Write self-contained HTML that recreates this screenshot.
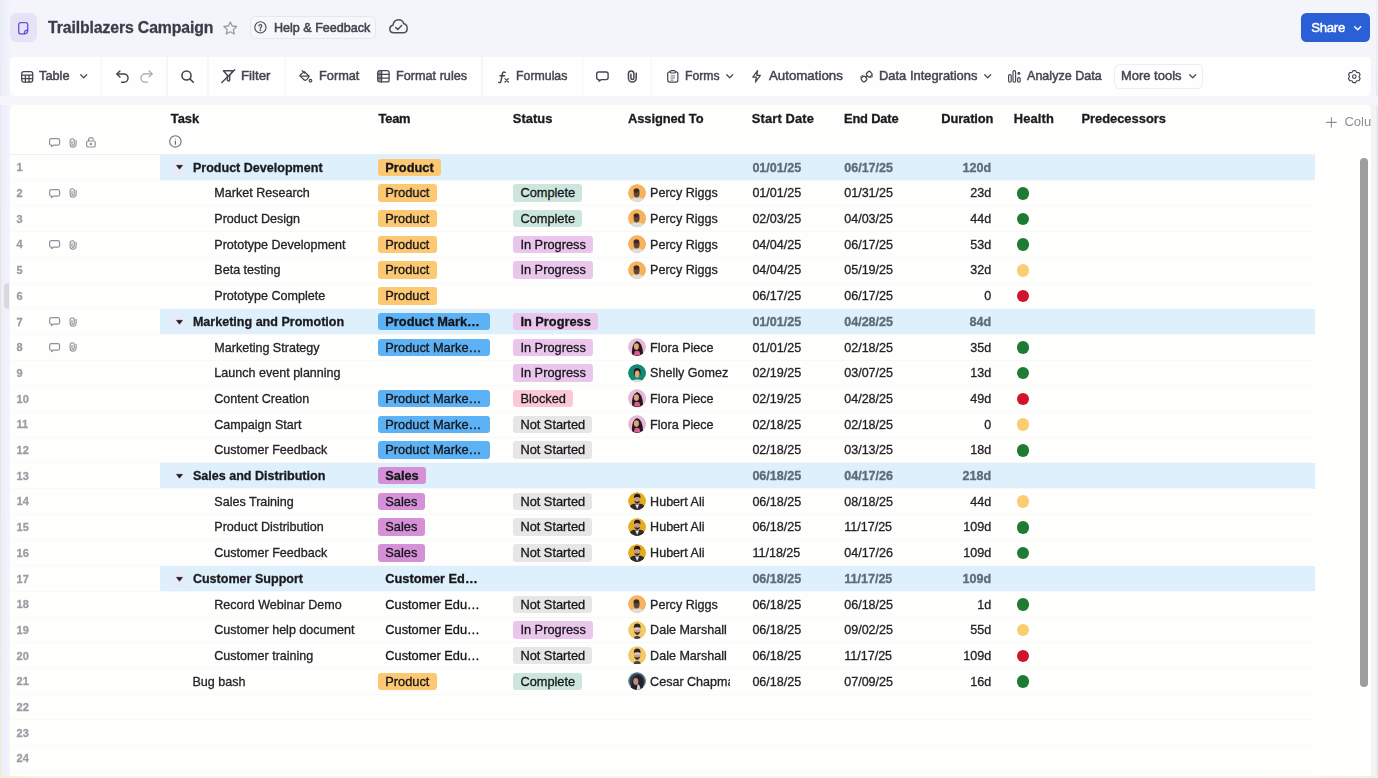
<!DOCTYPE html>
<html><head><meta charset="utf-8"><title>Trailblazers Campaign</title>
<style>
*{box-sizing:border-box}
html,body{margin:0;padding:0}
body{width:1378px;height:778px;overflow:hidden;position:relative;background:#f4f5fa;font-family:"Liberation Sans",sans-serif;}
.t{position:absolute;white-space:nowrap;line-height:20px;}
.i{position:absolute;overflow:visible}
.box{position:absolute}
.tb{-webkit-text-stroke:0.48px #44464f}
.tag{position:absolute;height:17.4px;border-radius:3.2px}
.row{position:absolute;left:160px;width:1155.3px;height:25.7px;background:#ddf0fb}
.ln{position:absolute;left:12px;width:1300px;height:1px;background:#f8f8fb}
.dot{position:absolute;width:12.7px;height:12.7px;border-radius:50%}
.sep{position:absolute;top:57px;width:1.3px;height:39.2px;background:#f5f5fa}
.av{position:absolute;width:18.3px;height:18.3px;border-radius:50%;overflow:hidden}
#w{position:absolute;left:0;top:0;width:1378px;height:778px;filter:blur(0.4px)}
.c{-webkit-text-stroke:0.3px currentColor}
</style></head><body><div id="w">

<div class="box" style="left:0;top:0;width:10px;height:778px;background:linear-gradient(90deg,#e9eefa,#eef1fb 60%,#f3f4fb)"></div>
<div class="box" style="left:0;top:0;width:1.3px;height:778px;background:linear-gradient(#f1eaf0,#f1dede 35%,#f2e3da 75%,#f1eac8)"></div>
<div class="box" style="left:4.2px;top:283px;width:4.8px;height:26px;border-radius:4.5px 0 0 4.5px;background:#d9dae0"></div>
<div class="box" style="left:1371px;top:100px;width:5px;height:678px;background:#f2f3f5"></div>
<div class="box" style="left:1375.6px;top:0;width:2.4px;height:778px;background:linear-gradient(#eef1f6,#e3efee 12%,#e3efee)"></div>
<div class="box" style="left:0;top:776px;width:1378px;height:2px;background:linear-gradient(90deg,#f1efd2,#fbf8e9 4%,#fbf8ea 90%,#eaf1ea)"></div>
<div class="box" style="left:10px;top:13px;width:27.2px;height:29.2px;border-radius:6.5px;background:#e8e2f7"></div>
<svg class="i" style="left:18.00px;top:21.50px" width="10.4" height="12.6" viewBox="0 0 10.4 12.6" fill="none" stroke="#6352d9" stroke-width="1.3" stroke-linecap="round" stroke-linejoin="round" ><path d="M2.6 0.7 H7.8 Q9.7 0.7 9.7 2.6 V8.2 Q9.7 11.9 6.2 11.9 H2.6 Q0.7 11.9 0.7 10 V2.6 Q0.7 0.7 2.6 0.7 Z"/><path d="M9.7 8.3 Q6.4 7.8 6.3 11.8"/></svg>
<span class="t c" style="left:48.00px;top:17px;line-height:21px;font-size:15.8px;font-weight:bold;color:#3b3d48;letter-spacing:-0.111px;">Trailblazers Campaign</span>
<svg class="i" style="left:223.20px;top:21.20px" width="14.6" height="14" viewBox="0 0 14.6 14" fill="none" stroke="#9a9ba3" stroke-width="1.3" stroke-linecap="round" stroke-linejoin="round" ><path d="M7.3 0.9 L9.2 5 L13.7 5.5 L10.4 8.6 L11.3 13 L7.3 10.8 L3.3 13 L4.2 8.6 L0.9 5.5 L5.4 5 Z"/></svg>
<div class="box" style="left:249.6px;top:15.8px;width:126px;height:23.6px;border-radius:5.5px;background:#f6f7fb;border:1px solid #e6e7ee"></div>
<svg class="i" style="left:254.20px;top:21.20px" width="12.8" height="12.8" viewBox="0 0 12.8 12.8" fill="none" stroke="#4a4c57" stroke-width="1.15" stroke-linecap="round" stroke-linejoin="round" ><circle cx="6.4" cy="6.4" r="5.6"/><path d="M4.9 5.1 Q4.9 3.6 6.4 3.6 Q7.9 3.6 7.9 5 Q7.9 6 6.4 6.7 V7.4"/><circle cx="6.4" cy="9.3" r="0.35" fill="#4a4c57"/></svg>
<span class="t " style="left:273.50px;top:18px;line-height:19px;font-size:13.2px;color:#41434e;transform:scaleX(0.9520);transform-origin:0 0;-webkit-text-stroke:0.55px #41434e;">Help &amp; Feedback</span>
<svg class="i" style="left:388.60px;top:19.00px" width="19" height="14.6" viewBox="0 0 19 14.6" fill="none" stroke="#4a4c57" stroke-width="1.45" stroke-linecap="round" stroke-linejoin="round" ><path d="M5 13.8 Q0.8 13.8 0.8 10 Q0.8 6.8 4 6.2 Q4.6 0.8 9.6 0.8 Q13.6 0.8 14.8 4.8 Q18.2 5.4 18.2 9.4 Q18.2 13.8 14 13.8 Z"/><path d="M6.6 8.4 L8.8 10.6 L12.6 6.4"/></svg>
<div class="box" style="left:1300.8px;top:13.2px;width:69.6px;height:28.8px;border-radius:5.5px;background:#2b5fd6"></div>
<span class="t c" style="left:1311.20px;top:18px;line-height:19px;font-size:13.2px;color:#ffffff;letter-spacing:-0.281px;-webkit-text-stroke:0.45px #fff;">Share</span>
<svg class="i" style="left:1354.40px;top:25.80px" width="7.4" height="4.6" viewBox="0 0 7.4 4.6" fill="none" stroke="#ffffff" stroke-width="1.5" stroke-linecap="round" stroke-linejoin="round" ><path d="M0.7 0.7 L3.7 3.7 L6.7 0.7"/></svg>
<div class="box" style="left:0;top:96px;width:1378px;height:9px;background:#f7f7fb"></div>
<div class="box" style="left:10.2px;top:57px;width:1360.8px;height:39.2px;border-radius:4.5px;background:#fefefe"></div>
<div class="sep" style="left:100.8px"></div>
<div class="sep" style="left:166.4px"></div>
<div class="sep" style="left:207.4px"></div>
<div class="sep" style="left:285.2px"></div>
<div class="sep" style="left:481.4px"></div>
<div class="sep" style="left:581.6px"></div>
<div class="sep" style="left:651.2px"></div>
<svg class="i" style="left:21.20px;top:70.60px" width="12.4" height="11.8" viewBox="0 0 12.4 11.8" fill="none" stroke="#44464f" stroke-width="1.25" stroke-linecap="round" stroke-linejoin="round" ><rect x="0.7" y="0.7" width="11" height="10.4" rx="2"/><path d="M0.7 4.1 H11.7 M0.7 7.6 H11.7 M4.4 4.1 V11.1 M8 4.1 V11.1"/></svg>
<span class="t tb" style="left:39.40px;top:66px;line-height:19px;font-size:13.0px;color:#44464f;transform:scaleX(0.9814);transform-origin:0 0;">Table</span>
<svg class="i" style="left:79.80px;top:74.40px" width="7.4" height="4.6" viewBox="0 0 7.4 4.6" fill="none" stroke="#4a4c57" stroke-width="1.3" stroke-linecap="round" stroke-linejoin="round" ><path d="M0.7 0.7 L3.7 3.7 L6.7 0.7"/></svg>
<svg class="i" style="left:115.60px;top:69.80px" width="13" height="13" viewBox="0 0 13 13" fill="none" stroke="#44464f" stroke-width="1.45" stroke-linecap="round" stroke-linejoin="round" ><path d="M1 3.9 H7.9 A4.15 4.15 0 0 1 7.9 12.2 H5.6"/><path d="M3.9 0.9 L0.9 3.9 L3.9 6.9"/></svg>
<svg class="i" style="left:140.20px;top:69.80px" width="13" height="13" viewBox="0 0 13 13" fill="none" stroke="#a4a5ae" stroke-width="1.3" stroke-linecap="round" stroke-linejoin="round" ><path d="M12 3.9 H5.1 A4.15 4.15 0 0 0 5.1 12.2 H7.4"/><path d="M9.1 0.9 L12.1 3.9 L9.1 6.9"/></svg>
<svg class="i" style="left:181.00px;top:70.00px" width="13.2" height="13.2" viewBox="0 0 13.2 13.2" fill="none" stroke="#44464f" stroke-width="1.55" stroke-linecap="round" stroke-linejoin="round" ><circle cx="5.5" cy="5.5" r="4.55"/><path d="M8.9 8.9 L12.3 12.3"/></svg>
<svg class="i" style="left:220.60px;top:69.40px" width="14.6" height="14.4" viewBox="0 0 14.6 14.4" fill="none" stroke="#44464f" stroke-width="1.4" stroke-linecap="round" stroke-linejoin="round" ><path d="M2.4 1.8 H12 L8.7 6.3 V11 Q8.6 12.4 7.2 11.8 L6.4 11.4 V6.3 Z"/><path d="M13.8 0.8 L0.8 13.6"/></svg>
<span class="t tb" style="left:241.20px;top:66px;line-height:19px;font-size:13.0px;color:#44464f;transform:scaleX(1.0211);transform-origin:0 0;">Filter</span>
<svg class="i" style="left:299.20px;top:70.00px" width="13.4" height="12.8" viewBox="0 0 13.4 12.8" fill="none" stroke="#44464f" stroke-width="1.2" stroke-linecap="round" stroke-linejoin="round" ><path d="M5.4 1.6 L9.6 5.8 Q10.4 6.6 9.6 7.4 L7.4 9.8 Q6.2 10.9 5 9.8 L1.4 6.4 Q0.6 5.6 1.4 4.8 Z"/><path d="M1.2 6.1 H10"/><path d="M3.2 0.7 L5.6 3"/><circle cx="11.5" cy="10.7" r="1.3"/></svg>
<span class="t tb" style="left:318.90px;top:66px;line-height:19px;font-size:13.0px;color:#44464f;transform:scaleX(0.9812);transform-origin:0 0;">Format</span>
<svg class="i" style="left:377.00px;top:70.20px" width="12.8" height="12.6" viewBox="0 0 12.8 12.6" fill="none" stroke="#44464f" stroke-width="1.25" stroke-linecap="round" stroke-linejoin="round" ><rect x="0.7" y="0.7" width="11.4" height="11.2" rx="2"/><path d="M0.7 4.4 H12.1 M0.7 8.1 H12.1 M4.6 0.7 V11.9"/><rect x="1.2" y="1.2" width="3" height="10.2" fill="#44464f" stroke="none" opacity="0.55"/></svg>
<span class="t tb" style="left:396.30px;top:66px;line-height:19px;font-size:13.0px;color:#44464f;transform:scaleX(0.9745);transform-origin:0 0;">Format rules</span>
<svg class="i" style="left:497.60px;top:70.60px" width="11.2" height="12.2" viewBox="0 0 11.2 12.2" fill="none" stroke="#44464f" stroke-width="1.45" stroke-linecap="round" stroke-linejoin="round" ><path d="M7.2 1.4 Q4.9 0.2 4.4 2.8 L3 10 Q2.6 12.2 0.7 11.4"/><path d="M2 4.7 H6.6"/><path d="M7 7.6 L10.4 11 M10.4 7.6 L7 11" stroke-width="1.25"/></svg>
<span class="t tb" style="left:515.90px;top:66px;line-height:19px;font-size:13.0px;color:#44464f;transform:scaleX(0.9487);transform-origin:0 0;">Formulas</span>
<svg class="i" style="left:596.20px;top:70.80px" width="12.8" height="11.2" viewBox="0 0 11.2 9.2" fill="none" stroke="#44464f" stroke-width="1.2" stroke-linecap="round" stroke-linejoin="round" ><path d="M2.4 0.6 H8.8 Q10.6 0.6 10.6 2.4 V5.4 Q10.6 7.2 8.8 7.2 H4.6 L2.6 8.6 V7.2 H2.4 Q0.6 7.2 0.6 5.4 V2.4 Q0.6 0.6 2.4 0.6 Z"/></svg>
<svg class="i" style="left:626.80px;top:69.80px" width="10.4" height="12.8" viewBox="0 0 8 9.8" fill="none" stroke="#44464f" stroke-width="1.15" stroke-linecap="round" stroke-linejoin="round" ><path d="M7.1 2.4 V6.3 A3 3 0 0 1 1.1 6.3 V2.8 A2.1 2.1 0 0 1 5.3 2.8 V6.2 A1.15 1.15 0 0 1 3 6.2 V3.2" /></svg>
<svg class="i" style="left:666.80px;top:69.80px" width="11.6" height="12.8" viewBox="0 0 11.6 12.8" fill="none" stroke="#44464f" stroke-width="1.2" stroke-linecap="round" stroke-linejoin="round" ><rect x="0.7" y="1.8" width="10.2" height="10.3" rx="2"/><rect x="3.3" y="0.6" width="5" height="2.4" rx="1" fill="#fefefe"/><path d="M3.6 5.9 H8 M3.6 8 H8 M3.6 10.1 H6.4" stroke-width="0.75" stroke-linecap="butt"/></svg>
<span class="t tb" style="left:685.10px;top:66px;line-height:19px;font-size:13.0px;color:#44464f;transform:scaleX(0.9394);transform-origin:0 0;">Forms</span>
<svg class="i" style="left:726.20px;top:74.40px" width="7.4" height="4.6" viewBox="0 0 7.4 4.6" fill="none" stroke="#4a4c57" stroke-width="1.3" stroke-linecap="round" stroke-linejoin="round" ><path d="M0.7 0.7 L3.7 3.7 L6.7 0.7"/></svg>
<svg class="i" style="left:751.80px;top:69.80px" width="9.2" height="12.8" viewBox="0 0 9.2 12.8" fill="none" stroke="#44464f" stroke-width="1.2" stroke-linecap="round" stroke-linejoin="round" ><path d="M5.6 0.7 L0.8 7.2 H4.4 L3.4 12.1 L8.4 5.4 H4.8 Z"/></svg>
<span class="t tb" style="left:768.50px;top:66px;line-height:19px;font-size:13.0px;color:#44464f;transform:scaleX(1.0213);transform-origin:0 0;">Automations</span>
<svg class="i" style="left:860.00px;top:69.60px" width="13.2" height="13.2" viewBox="0 0 13.2 13.2" fill="none" stroke="#44464f" stroke-width="1.3" stroke-linecap="round" stroke-linejoin="round" ><g transform="rotate(-42 6.6 6.6)"><rect x="0.6" y="4.1" width="4.9" height="5" rx="1.5"/><rect x="7.7" y="4.1" width="4.9" height="5" rx="1.5"/><path d="M5.5 6.6 H7.7"/><path d="M2.1 2.7 V4.1 M4 2.7 V4.1 M9.2 9.1 V10.5 M11.1 9.1 V10.5" stroke-width="1"/></g></svg>
<span class="t tb" style="left:879.30px;top:66px;line-height:19px;font-size:13.0px;color:#44464f;transform:scaleX(0.9939);transform-origin:0 0;">Data Integrations</span>
<svg class="i" style="left:983.80px;top:74.40px" width="7.4" height="4.6" viewBox="0 0 7.4 4.6" fill="none" stroke="#4a4c57" stroke-width="1.3" stroke-linecap="round" stroke-linejoin="round" ><path d="M0.7 0.7 L3.7 3.7 L6.7 0.7"/></svg>
<svg class="i" style="left:1007.60px;top:69.80px" width="13.4" height="12.8" viewBox="0 0 13.4 12.8" fill="none" stroke="#44464f" stroke-width="1.15" stroke-linecap="round" stroke-linejoin="round" ><rect x="0.6" y="4.6" width="2.6" height="7.6" rx="1.2"/><rect x="5" y="0.6" width="2.6" height="11.6" rx="1.2"/><rect x="9.6" y="7.6" width="2.6" height="4.6" rx="1.2"/><circle cx="10.9" cy="3.4" r="0.9" fill="#44464f"/></svg>
<span class="t tb" style="left:1026.60px;top:66px;line-height:19px;font-size:13.0px;color:#44464f;transform:scaleX(0.9661);transform-origin:0 0;">Analyze Data</span>
<div class="box" style="left:1113.6px;top:64.2px;width:89.6px;height:24.4px;border-radius:5.5px;background:#fefefe;border:1px solid #ebedf4"></div>
<span class="t tb" style="left:1120.90px;top:66px;line-height:19px;font-size:13.0px;color:#44464f;transform:scaleX(0.9968);transform-origin:0 0;">More tools</span>
<svg class="i" style="left:1188.90px;top:74.40px" width="7.4" height="4.6" viewBox="0 0 7.4 4.6" fill="none" stroke="#4a4c57" stroke-width="1.3" stroke-linecap="round" stroke-linejoin="round" ><path d="M0.7 0.7 L3.7 3.7 L6.7 0.7"/></svg>
<svg class="i" style="left:1347.60px;top:69.80px" width="12.6" height="13.2" viewBox="0 0 12.6 13.2" fill="none" stroke="#44464f" stroke-width="1.15" stroke-linecap="round" stroke-linejoin="round" ><path d="M5.13 0.56 L7.47 0.56 L8.68 2.49 L10.94 2.57 L12.11 4.60 L11.05 6.60 L12.11 8.60 L10.94 10.63 L8.68 10.71 L7.47 12.64 L5.13 12.64 L3.93 10.71 L1.66 10.63 L0.49 8.60 L1.55 6.60 L0.49 4.60 L1.66 2.57 L3.92 2.49 Z" stroke-linejoin="round"/><circle cx="6.3" cy="6.6" r="1.8"/></svg>
<div class="box" style="left:9.6px;top:104.5px;width:1361.4px;height:671.5px;border-radius:5px 5px 0 0;background:#fefefd"></div>
<span class="t c" style="left:170.80px;top:109px;line-height:19px;font-size:12.9px;font-weight:bold;color:#1b1b1f;letter-spacing:-0.016px;">Task</span>
<span class="t c" style="left:378.50px;top:109px;line-height:19px;font-size:12.9px;font-weight:bold;color:#1b1b1f;letter-spacing:-0.214px;">Team</span>
<span class="t c" style="left:512.80px;top:109px;line-height:19px;font-size:12.9px;font-weight:bold;color:#1b1b1f;letter-spacing:0.035px;">Status</span>
<span class="t c" style="left:628.00px;top:109px;line-height:19px;font-size:12.9px;font-weight:bold;color:#1b1b1f;letter-spacing:-0.085px;">Assigned To</span>
<span class="t c" style="left:751.80px;top:109px;line-height:19px;font-size:12.9px;font-weight:bold;color:#1b1b1f;letter-spacing:0.140px;">Start Date</span>
<span class="t c" style="left:844.00px;top:109px;line-height:19px;font-size:12.9px;font-weight:bold;color:#1b1b1f;letter-spacing:-0.187px;">End Date</span>
<span class="t c" style="left:941.20px;top:109px;line-height:19px;font-size:12.9px;font-weight:bold;color:#1b1b1f;letter-spacing:-0.104px;">Duration</span>
<span class="t c" style="left:1013.70px;top:109px;line-height:19px;font-size:12.9px;font-weight:bold;color:#1b1b1f;letter-spacing:0.135px;">Health</span>
<span class="t c" style="left:1081.40px;top:109px;line-height:19px;font-size:12.9px;font-weight:bold;color:#1b1b1f;letter-spacing:-0.002px;">Predecessors</span>
<svg class="i" style="left:49.30px;top:138.00px" width="11.2" height="9.2" viewBox="0 0 11.2 9.2" fill="none" stroke="#8f909b" stroke-width="1.2" stroke-linecap="round" stroke-linejoin="round" ><path d="M2.4 0.6 H8.8 Q10.6 0.6 10.6 2.4 V5.4 Q10.6 7.2 8.8 7.2 H4.6 L2.6 8.6 V7.2 H2.4 Q0.6 7.2 0.6 5.4 V2.4 Q0.6 0.6 2.4 0.6 Z"/></svg>
<svg class="i" style="left:69.00px;top:137.80px" width="8" height="9.8" viewBox="0 0 8 9.8" fill="none" stroke="#8f909b" stroke-width="1.1" stroke-linecap="round" stroke-linejoin="round" ><path d="M7.1 2.4 V6.3 A3 3 0 0 1 1.1 6.3 V2.8 A2.1 2.1 0 0 1 5.3 2.8 V6.2 A1.15 1.15 0 0 1 3 6.2 V3.2" /></svg>
<svg class="i" style="left:86.00px;top:137.20px" width="9.8" height="10.6" viewBox="0 0 9.8 10.6" fill="none" stroke="#8f909b" stroke-width="1.2" stroke-linecap="round" stroke-linejoin="round" ><rect x="0.6" y="4" width="8.6" height="6" rx="1.4"/><path d="M2.6 4 V2.6 Q2.6 0.6 4.9 0.6 Q7.2 0.6 7.2 2.6"/><circle cx="4.9" cy="7" r="0.7" fill="#8f909b"/></svg>
<svg class="i" style="left:169.30px;top:135.00px" width="12.8" height="12.8" viewBox="0 0 12.8 12.8" fill="none" stroke="#6d6e78" stroke-width="1.1" stroke-linecap="round" stroke-linejoin="round" ><circle cx="6.4" cy="6.4" r="5.7"/><path d="M6.4 6.2 V9.2" stroke-width="1.2"/><circle cx="6.4" cy="3.9" r="0.5" fill="#6d6e78" stroke="none"/></svg>
<svg class="i" style="left:1326.20px;top:117.40px" width="10.8" height="10.8" viewBox="0 0 10.8 10.8" fill="none" stroke="#8d8e97" stroke-width="1.1" stroke-linecap="round" stroke-linejoin="round" ><path d="M5.4 0.6 V10.2 M0.6 5.4 H10.2"/></svg>
<div class="box" style="left:1340px;top:108px;width:31px;height:26px;overflow:hidden"><span class="t" style="left:4.4px;top:4.4px;font-size:13px;color:#8d8e97">Column</span></div>
<div class="box" style="left:1360px;top:157.6px;width:7.6px;height:529px;border-radius:3.8px;background:#9e9e9f"></div>
<div class="row" style="top:154.50px"></div>
<div class="row" style="top:308.70px"></div>
<div class="row" style="top:462.90px"></div>
<div class="row" style="top:565.70px"></div>
<div class="ln" style="top:154.00px;background:#efeff3;left:10px;width:1305px"></div>
<div class="ln" style="top:179.70px"></div>
<div class="ln" style="top:205.40px"></div>
<div class="ln" style="top:231.10px"></div>
<div class="ln" style="top:256.80px"></div>
<div class="ln" style="top:282.50px"></div>
<div class="ln" style="top:308.20px"></div>
<div class="ln" style="top:333.90px"></div>
<div class="ln" style="top:359.60px"></div>
<div class="ln" style="top:385.30px"></div>
<div class="ln" style="top:411.00px"></div>
<div class="ln" style="top:436.70px"></div>
<div class="ln" style="top:462.40px"></div>
<div class="ln" style="top:488.10px"></div>
<div class="ln" style="top:513.80px"></div>
<div class="ln" style="top:539.50px"></div>
<div class="ln" style="top:565.20px"></div>
<div class="ln" style="top:590.90px"></div>
<div class="ln" style="top:616.60px"></div>
<div class="ln" style="top:642.30px"></div>
<div class="ln" style="top:668.00px"></div>
<div class="ln" style="top:693.70px"></div>
<div class="ln" style="top:719.40px"></div>
<div class="ln" style="top:745.10px"></div>
<div class="ln" style="top:770.80px"></div>
<span class="t c" style="left:16.60px;top:159px;line-height:16px;font-size:11px;font-weight:bold;color:#9b9ca5;">1</span>
<div class="box" style="left:171.2px;top:158.95px;width:15.2px;height:16.8px;border-radius:4px;background:#ebe8f6;opacity:.55"></div>
<svg class="i" style="left:175.8px;top:165.35px" width="7" height="4.6" viewBox="0 0 7 4.6"><path d="M0.4 0.3 H6.6 L3.5 4.3Z" fill="#1c1c20" stroke="#1c1c20" stroke-width="0.5" stroke-linejoin="round"/></svg>
<span class="t c" style="left:192.90px;top:159px;line-height:18px;font-size:12.55px;font-weight:bold;color:#1b1b1f;">Product Development</span>
<div class="tag" style="left:378px;top:158.65px;width:63.26px;background:#fcc872"></div>
<span class="t c" style="left:385.30px;top:158px;line-height:19px;font-size:12.8px;font-weight:bold;color:#15151a;">Product</span>
<span class="t c" style="left:752.40px;top:159px;line-height:18px;font-size:12.55px;font-weight:bold;color:#5e6b79;">01/01/25</span>
<span class="t c" style="left:844.20px;top:159px;line-height:18px;font-size:12.55px;font-weight:bold;color:#5e6b79;">06/17/25</span>
<span class="t c" style="right:386.80px;top:159px;line-height:18px;font-size:12.55px;font-weight:bold;color:#5e6b79;">120d</span>
<span class="t c" style="left:16.60px;top:185px;line-height:16px;font-size:11px;font-weight:bold;color:#9b9ca5;">2</span>
<svg class="i" style="left:49.30px;top:188.65px" width="11.2" height="9.2" viewBox="0 0 11.2 9.2" fill="none" stroke="#8f909b" stroke-width="1.2" stroke-linecap="round" stroke-linejoin="round" ><path d="M2.4 0.6 H8.8 Q10.6 0.6 10.6 2.4 V5.4 Q10.6 7.2 8.8 7.2 H4.6 L2.6 8.6 V7.2 H2.4 Q0.6 7.2 0.6 5.4 V2.4 Q0.6 0.6 2.4 0.6 Z"/></svg>
<svg class="i" style="left:69.00px;top:188.25px" width="8" height="9.8" viewBox="0 0 8 9.8" fill="none" stroke="#8f909b" stroke-width="1.1" stroke-linecap="round" stroke-linejoin="round" ><path d="M7.1 2.4 V6.3 A3 3 0 0 1 1.1 6.3 V2.8 A2.1 2.1 0 0 1 5.3 2.8 V6.2 A1.15 1.15 0 0 1 3 6.2 V3.2" /></svg>
<span class="t c" style="left:214.30px;top:184px;line-height:18px;font-size:12.55px;color:#242428;">Market Research</span>
<div class="tag" style="left:378px;top:184.35px;width:59.01px;background:#fcc872"></div>
<span class="t c" style="left:385.30px;top:183px;line-height:19px;font-size:12.8px;color:#15151a;">Product</span>
<div class="tag" style="left:513.1px;top:184.35px;width:69.38px;background:#cde6dd"></div>
<span class="t c" style="left:520.40px;top:183px;line-height:19px;font-size:12.8px;color:#15151a;">Complete</span>
<svg class="i" style="left:627.70px;top:183.75px;border-radius:50%;overflow:hidden" width="18.3" height="18.3" viewBox="0 0 18.3 18.3"><defs><clipPath id="c627_183"><circle cx="9.15" cy="9.15" r="9.15"/></clipPath></defs><g clip-path="url(#c627_183)"><rect width="18.3" height="18.3" fill="#f6b25c"/><ellipse cx="9.2" cy="18.4" rx="8" ry="5" fill="#dcdce1"/><ellipse cx="8.6" cy="9" rx="3" ry="4.6" fill="#5e4636"/><ellipse cx="8.4" cy="6.4" rx="2.8" ry="2" fill="#3a2a2a"/></g></svg>
<span class="t c" style="left:650.10px;top:184px;line-height:18px;font-size:12.55px;color:#242428;">Percy Riggs</span>
<span class="t c" style="left:752.40px;top:184px;line-height:18px;font-size:12.55px;color:#242428;">01/01/25</span>
<span class="t c" style="left:844.20px;top:184px;line-height:18px;font-size:12.55px;color:#242428;">01/31/25</span>
<span class="t c" style="right:386.80px;top:184px;line-height:18px;font-size:12.55px;color:#242428;">23d</span>
<div class="dot" style="left:1016.65px;top:186.90px;background:#1f7a33"></div>
<span class="t c" style="left:16.60px;top:211px;line-height:16px;font-size:11px;font-weight:bold;color:#9b9ca5;">3</span>
<span class="t c" style="left:214.30px;top:210px;line-height:18px;font-size:12.55px;color:#242428;">Product Design</span>
<div class="tag" style="left:378px;top:210.05px;width:59.01px;background:#fcc872"></div>
<span class="t c" style="left:385.30px;top:209px;line-height:19px;font-size:12.8px;color:#15151a;">Product</span>
<div class="tag" style="left:513.1px;top:210.05px;width:69.38px;background:#cde6dd"></div>
<span class="t c" style="left:520.40px;top:209px;line-height:19px;font-size:12.8px;color:#15151a;">Complete</span>
<svg class="i" style="left:627.70px;top:209.45px;border-radius:50%;overflow:hidden" width="18.3" height="18.3" viewBox="0 0 18.3 18.3"><defs><clipPath id="c627_209"><circle cx="9.15" cy="9.15" r="9.15"/></clipPath></defs><g clip-path="url(#c627_209)"><rect width="18.3" height="18.3" fill="#f6b25c"/><ellipse cx="9.2" cy="18.4" rx="8" ry="5" fill="#dcdce1"/><ellipse cx="8.6" cy="9" rx="3" ry="4.6" fill="#5e4636"/><ellipse cx="8.4" cy="6.4" rx="2.8" ry="2" fill="#3a2a2a"/></g></svg>
<span class="t c" style="left:650.10px;top:210px;line-height:18px;font-size:12.55px;color:#242428;">Percy Riggs</span>
<span class="t c" style="left:752.40px;top:210px;line-height:18px;font-size:12.55px;color:#242428;">02/03/25</span>
<span class="t c" style="left:844.20px;top:210px;line-height:18px;font-size:12.55px;color:#242428;">04/03/25</span>
<span class="t c" style="right:386.80px;top:210px;line-height:18px;font-size:12.55px;color:#242428;">44d</span>
<div class="dot" style="left:1016.65px;top:212.60px;background:#1f7a33"></div>
<span class="t c" style="left:16.60px;top:236px;line-height:16px;font-size:11px;font-weight:bold;color:#9b9ca5;">4</span>
<svg class="i" style="left:49.30px;top:240.05px" width="11.2" height="9.2" viewBox="0 0 11.2 9.2" fill="none" stroke="#8f909b" stroke-width="1.2" stroke-linecap="round" stroke-linejoin="round" ><path d="M2.4 0.6 H8.8 Q10.6 0.6 10.6 2.4 V5.4 Q10.6 7.2 8.8 7.2 H4.6 L2.6 8.6 V7.2 H2.4 Q0.6 7.2 0.6 5.4 V2.4 Q0.6 0.6 2.4 0.6 Z"/></svg>
<svg class="i" style="left:69.00px;top:239.65px" width="8" height="9.8" viewBox="0 0 8 9.8" fill="none" stroke="#8f909b" stroke-width="1.1" stroke-linecap="round" stroke-linejoin="round" ><path d="M7.1 2.4 V6.3 A3 3 0 0 1 1.1 6.3 V2.8 A2.1 2.1 0 0 1 5.3 2.8 V6.2 A1.15 1.15 0 0 1 3 6.2 V3.2" /></svg>
<span class="t c" style="left:214.30px;top:236px;line-height:18px;font-size:12.55px;color:#242428;">Prototype Development</span>
<div class="tag" style="left:378px;top:235.75px;width:59.01px;background:#fcc872"></div>
<span class="t c" style="left:385.30px;top:235px;line-height:19px;font-size:12.8px;color:#15151a;">Product</span>
<div class="tag" style="left:513.1px;top:235.75px;width:80.05px;background:#ebc6ec"></div>
<span class="t c" style="left:520.40px;top:235px;line-height:19px;font-size:12.8px;color:#15151a;">In Progress</span>
<svg class="i" style="left:627.70px;top:235.15px;border-radius:50%;overflow:hidden" width="18.3" height="18.3" viewBox="0 0 18.3 18.3"><defs><clipPath id="c627_235"><circle cx="9.15" cy="9.15" r="9.15"/></clipPath></defs><g clip-path="url(#c627_235)"><rect width="18.3" height="18.3" fill="#f6b25c"/><ellipse cx="9.2" cy="18.4" rx="8" ry="5" fill="#dcdce1"/><ellipse cx="8.6" cy="9" rx="3" ry="4.6" fill="#5e4636"/><ellipse cx="8.4" cy="6.4" rx="2.8" ry="2" fill="#3a2a2a"/></g></svg>
<span class="t c" style="left:650.10px;top:236px;line-height:18px;font-size:12.55px;color:#242428;">Percy Riggs</span>
<span class="t c" style="left:752.40px;top:236px;line-height:18px;font-size:12.55px;color:#242428;">04/04/25</span>
<span class="t c" style="left:844.20px;top:236px;line-height:18px;font-size:12.55px;color:#242428;">06/17/25</span>
<span class="t c" style="right:386.80px;top:236px;line-height:18px;font-size:12.55px;color:#242428;">53d</span>
<div class="dot" style="left:1016.65px;top:238.30px;background:#1f7a33"></div>
<span class="t c" style="left:16.60px;top:262px;line-height:16px;font-size:11px;font-weight:bold;color:#9b9ca5;">5</span>
<span class="t c" style="left:214.30px;top:261px;line-height:18px;font-size:12.55px;color:#242428;">Beta testing</span>
<div class="tag" style="left:378px;top:261.45px;width:59.01px;background:#fcc872"></div>
<span class="t c" style="left:385.30px;top:260px;line-height:19px;font-size:12.8px;color:#15151a;">Product</span>
<div class="tag" style="left:513.1px;top:261.45px;width:80.05px;background:#ebc6ec"></div>
<span class="t c" style="left:520.40px;top:260px;line-height:19px;font-size:12.8px;color:#15151a;">In Progress</span>
<svg class="i" style="left:627.70px;top:260.85px;border-radius:50%;overflow:hidden" width="18.3" height="18.3" viewBox="0 0 18.3 18.3"><defs><clipPath id="c627_260"><circle cx="9.15" cy="9.15" r="9.15"/></clipPath></defs><g clip-path="url(#c627_260)"><rect width="18.3" height="18.3" fill="#f6b25c"/><ellipse cx="9.2" cy="18.4" rx="8" ry="5" fill="#dcdce1"/><ellipse cx="8.6" cy="9" rx="3" ry="4.6" fill="#5e4636"/><ellipse cx="8.4" cy="6.4" rx="2.8" ry="2" fill="#3a2a2a"/></g></svg>
<span class="t c" style="left:650.10px;top:261px;line-height:18px;font-size:12.55px;color:#242428;">Percy Riggs</span>
<span class="t c" style="left:752.40px;top:261px;line-height:18px;font-size:12.55px;color:#242428;">04/04/25</span>
<span class="t c" style="left:844.20px;top:261px;line-height:18px;font-size:12.55px;color:#242428;">05/19/25</span>
<span class="t c" style="right:386.80px;top:261px;line-height:18px;font-size:12.55px;color:#242428;">32d</span>
<div class="dot" style="left:1016.65px;top:264.00px;background:#f9cd70"></div>
<span class="t c" style="left:16.60px;top:288px;line-height:16px;font-size:11px;font-weight:bold;color:#9b9ca5;">6</span>
<span class="t c" style="left:214.30px;top:287px;line-height:18px;font-size:12.55px;color:#242428;">Prototype Complete</span>
<div class="tag" style="left:378px;top:287.15px;width:59.01px;background:#fcc872"></div>
<span class="t c" style="left:385.30px;top:286px;line-height:19px;font-size:12.8px;color:#15151a;">Product</span>
<span class="t c" style="left:752.40px;top:287px;line-height:18px;font-size:12.55px;color:#242428;">06/17/25</span>
<span class="t c" style="left:844.20px;top:287px;line-height:18px;font-size:12.55px;color:#242428;">06/17/25</span>
<span class="t c" style="right:386.80px;top:287px;line-height:18px;font-size:12.55px;color:#242428;">0</span>
<div class="dot" style="left:1016.65px;top:289.70px;background:#d2132c"></div>
<span class="t c" style="left:16.60px;top:314px;line-height:16px;font-size:11px;font-weight:bold;color:#9b9ca5;">7</span>
<svg class="i" style="left:49.30px;top:317.15px" width="11.2" height="9.2" viewBox="0 0 11.2 9.2" fill="none" stroke="#8f909b" stroke-width="1.2" stroke-linecap="round" stroke-linejoin="round" ><path d="M2.4 0.6 H8.8 Q10.6 0.6 10.6 2.4 V5.4 Q10.6 7.2 8.8 7.2 H4.6 L2.6 8.6 V7.2 H2.4 Q0.6 7.2 0.6 5.4 V2.4 Q0.6 0.6 2.4 0.6 Z"/></svg>
<svg class="i" style="left:69.00px;top:316.75px" width="8" height="9.8" viewBox="0 0 8 9.8" fill="none" stroke="#8f909b" stroke-width="1.1" stroke-linecap="round" stroke-linejoin="round" ><path d="M7.1 2.4 V6.3 A3 3 0 0 1 1.1 6.3 V2.8 A2.1 2.1 0 0 1 5.3 2.8 V6.2 A1.15 1.15 0 0 1 3 6.2 V3.2" /></svg>
<div class="box" style="left:171.2px;top:313.15px;width:15.2px;height:16.8px;border-radius:4px;background:#ebe8f6;opacity:.55"></div>
<svg class="i" style="left:175.8px;top:319.55px" width="7" height="4.6" viewBox="0 0 7 4.6"><path d="M0.4 0.3 H6.6 L3.5 4.3Z" fill="#1c1c20" stroke="#1c1c20" stroke-width="0.5" stroke-linejoin="round"/></svg>
<span class="t c" style="left:192.90px;top:313px;line-height:18px;font-size:12.55px;font-weight:bold;color:#1b1b1f;">Marketing and Promotion</span>
<div class="tag" style="left:378px;top:312.85px;width:112.00px;background:#5cb2f4"></div>
<span class="t c" style="left:385.30px;top:312px;line-height:19px;font-size:12.8px;font-weight:bold;color:#15151a;">Product Mark…</span>
<div class="tag" style="left:513.1px;top:312.85px;width:85.03px;background:#ebc6ec"></div>
<span class="t c" style="left:520.40px;top:312px;line-height:19px;font-size:12.8px;font-weight:bold;color:#15151a;">In Progress</span>
<span class="t c" style="left:752.40px;top:313px;line-height:18px;font-size:12.55px;font-weight:bold;color:#5e6b79;">01/01/25</span>
<span class="t c" style="left:844.20px;top:313px;line-height:18px;font-size:12.55px;font-weight:bold;color:#5e6b79;">04/28/25</span>
<span class="t c" style="right:386.80px;top:313px;line-height:18px;font-size:12.55px;font-weight:bold;color:#5e6b79;">84d</span>
<span class="t c" style="left:16.60px;top:339px;line-height:16px;font-size:11px;font-weight:bold;color:#9b9ca5;">8</span>
<svg class="i" style="left:49.30px;top:342.85px" width="11.2" height="9.2" viewBox="0 0 11.2 9.2" fill="none" stroke="#8f909b" stroke-width="1.2" stroke-linecap="round" stroke-linejoin="round" ><path d="M2.4 0.6 H8.8 Q10.6 0.6 10.6 2.4 V5.4 Q10.6 7.2 8.8 7.2 H4.6 L2.6 8.6 V7.2 H2.4 Q0.6 7.2 0.6 5.4 V2.4 Q0.6 0.6 2.4 0.6 Z"/></svg>
<svg class="i" style="left:69.00px;top:342.45px" width="8" height="9.8" viewBox="0 0 8 9.8" fill="none" stroke="#8f909b" stroke-width="1.1" stroke-linecap="round" stroke-linejoin="round" ><path d="M7.1 2.4 V6.3 A3 3 0 0 1 1.1 6.3 V2.8 A2.1 2.1 0 0 1 5.3 2.8 V6.2 A1.15 1.15 0 0 1 3 6.2 V3.2" /></svg>
<span class="t c" style="left:214.30px;top:339px;line-height:18px;font-size:12.55px;color:#242428;">Marketing Strategy</span>
<div class="tag" style="left:378px;top:338.55px;width:112.00px;background:#5cb2f4"></div>
<span class="t c" style="left:385.30px;top:338px;line-height:19px;font-size:12.8px;color:#15151a;">Product Marke…</span>
<div class="tag" style="left:513.1px;top:338.55px;width:80.05px;background:#ebc6ec"></div>
<span class="t c" style="left:520.40px;top:338px;line-height:19px;font-size:12.8px;color:#15151a;">In Progress</span>
<svg class="i" style="left:627.70px;top:337.95px;border-radius:50%;overflow:hidden" width="18.3" height="18.3" viewBox="0 0 18.3 18.3"><defs><clipPath id="c627_337"><circle cx="9.15" cy="9.15" r="9.15"/></clipPath></defs><g clip-path="url(#c627_337)"><rect width="18.3" height="18.3" fill="#e8b8da"/><path d="M4.2 17 Q3 6 9 3 Q15 5 15 16 Q12 18.6 9 18.4 Q6 18.4 4.2 17Z" fill="#2a1620"/><ellipse cx="8.4" cy="8.6" rx="2.5" ry="3.3" fill="#d9a878"/><path d="M6.6 13.6 Q9 12 11.6 13.8 L12.4 17.6 H6Z" fill="#d8608c"/></g></svg>
<span class="t c" style="left:650.10px;top:339px;line-height:18px;font-size:12.55px;color:#242428;">Flora Piece</span>
<span class="t c" style="left:752.40px;top:339px;line-height:18px;font-size:12.55px;color:#242428;">01/01/25</span>
<span class="t c" style="left:844.20px;top:339px;line-height:18px;font-size:12.55px;color:#242428;">02/18/25</span>
<span class="t c" style="right:386.80px;top:339px;line-height:18px;font-size:12.55px;color:#242428;">35d</span>
<div class="dot" style="left:1016.65px;top:341.10px;background:#1f7a33"></div>
<span class="t c" style="left:16.60px;top:365px;line-height:16px;font-size:11px;font-weight:bold;color:#9b9ca5;">9</span>
<span class="t c" style="left:214.30px;top:364px;line-height:18px;font-size:12.55px;color:#242428;">Launch event planning</span>
<div class="tag" style="left:513.1px;top:364.25px;width:80.05px;background:#ebc6ec"></div>
<span class="t c" style="left:520.40px;top:363px;line-height:19px;font-size:12.8px;color:#15151a;">In Progress</span>
<svg class="i" style="left:627.70px;top:363.65px;border-radius:50%;overflow:hidden" width="18.3" height="18.3" viewBox="0 0 18.3 18.3"><defs><clipPath id="c627_363"><circle cx="9.15" cy="9.15" r="9.15"/></clipPath></defs><g clip-path="url(#c627_363)"><rect width="18.3" height="18.3" fill="#128a73"/><ellipse cx="9.2" cy="8.4" rx="3.4" ry="4.4" fill="#2a1a1a"/><ellipse cx="9.2" cy="10" rx="2.4" ry="3.6" fill="#d9ab7c"/><ellipse cx="9.2" cy="18.2" rx="5" ry="2.6" fill="#e9e6e6"/></g></svg>
<span class="t c" style="left:650.10px;top:364px;line-height:18px;font-size:12.55px;color:#242428;">Shelly Gomez</span>
<span class="t c" style="left:752.40px;top:364px;line-height:18px;font-size:12.55px;color:#242428;">02/19/25</span>
<span class="t c" style="left:844.20px;top:364px;line-height:18px;font-size:12.55px;color:#242428;">03/07/25</span>
<span class="t c" style="right:386.80px;top:364px;line-height:18px;font-size:12.55px;color:#242428;">13d</span>
<div class="dot" style="left:1016.65px;top:366.80px;background:#1f7a33"></div>
<span class="t c" style="left:16.60px;top:391px;line-height:16px;font-size:11px;font-weight:bold;color:#9b9ca5;">10</span>
<span class="t c" style="left:214.30px;top:390px;line-height:18px;font-size:12.55px;color:#242428;">Content Creation</span>
<div class="tag" style="left:378px;top:389.95px;width:112.00px;background:#5cb2f4"></div>
<span class="t c" style="left:385.30px;top:389px;line-height:19px;font-size:12.8px;color:#15151a;">Product Marke…</span>
<div class="tag" style="left:513.1px;top:389.95px;width:60.14px;background:#fbc9d6"></div>
<span class="t c" style="left:520.40px;top:389px;line-height:19px;font-size:12.8px;color:#15151a;">Blocked</span>
<svg class="i" style="left:627.70px;top:389.35px;border-radius:50%;overflow:hidden" width="18.3" height="18.3" viewBox="0 0 18.3 18.3"><defs><clipPath id="c627_389"><circle cx="9.15" cy="9.15" r="9.15"/></clipPath></defs><g clip-path="url(#c627_389)"><rect width="18.3" height="18.3" fill="#e8b8da"/><path d="M4.2 17 Q3 6 9 3 Q15 5 15 16 Q12 18.6 9 18.4 Q6 18.4 4.2 17Z" fill="#2a1620"/><ellipse cx="8.4" cy="8.6" rx="2.5" ry="3.3" fill="#d9a878"/><path d="M6.6 13.6 Q9 12 11.6 13.8 L12.4 17.6 H6Z" fill="#d8608c"/></g></svg>
<span class="t c" style="left:650.10px;top:390px;line-height:18px;font-size:12.55px;color:#242428;">Flora Piece</span>
<span class="t c" style="left:752.40px;top:390px;line-height:18px;font-size:12.55px;color:#242428;">02/19/25</span>
<span class="t c" style="left:844.20px;top:390px;line-height:18px;font-size:12.55px;color:#242428;">04/28/25</span>
<span class="t c" style="right:386.80px;top:390px;line-height:18px;font-size:12.55px;color:#242428;">49d</span>
<div class="dot" style="left:1016.65px;top:392.50px;background:#d2132c"></div>
<span class="t c" style="left:16.60px;top:416px;line-height:16px;font-size:11px;font-weight:bold;color:#9b9ca5;">11</span>
<span class="t c" style="left:214.30px;top:416px;line-height:18px;font-size:12.55px;color:#242428;">Campaign Start</span>
<div class="tag" style="left:378px;top:415.65px;width:112.00px;background:#5cb2f4"></div>
<span class="t c" style="left:385.30px;top:415px;line-height:19px;font-size:12.8px;color:#15151a;">Product Marke…</span>
<div class="tag" style="left:513.1px;top:415.65px;width:79.34px;background:#e6e6e6"></div>
<span class="t c" style="left:520.40px;top:415px;line-height:19px;font-size:12.8px;color:#15151a;">Not Started</span>
<svg class="i" style="left:627.70px;top:415.05px;border-radius:50%;overflow:hidden" width="18.3" height="18.3" viewBox="0 0 18.3 18.3"><defs><clipPath id="c627_415"><circle cx="9.15" cy="9.15" r="9.15"/></clipPath></defs><g clip-path="url(#c627_415)"><rect width="18.3" height="18.3" fill="#e8b8da"/><path d="M4.2 17 Q3 6 9 3 Q15 5 15 16 Q12 18.6 9 18.4 Q6 18.4 4.2 17Z" fill="#2a1620"/><ellipse cx="8.4" cy="8.6" rx="2.5" ry="3.3" fill="#d9a878"/><path d="M6.6 13.6 Q9 12 11.6 13.8 L12.4 17.6 H6Z" fill="#d8608c"/></g></svg>
<span class="t c" style="left:650.10px;top:416px;line-height:18px;font-size:12.55px;color:#242428;">Flora Piece</span>
<span class="t c" style="left:752.40px;top:416px;line-height:18px;font-size:12.55px;color:#242428;">02/18/25</span>
<span class="t c" style="left:844.20px;top:416px;line-height:18px;font-size:12.55px;color:#242428;">02/18/25</span>
<span class="t c" style="right:386.80px;top:416px;line-height:18px;font-size:12.55px;color:#242428;">0</span>
<div class="dot" style="left:1016.65px;top:418.20px;background:#f9cd70"></div>
<span class="t c" style="left:16.60px;top:442px;line-height:16px;font-size:11px;font-weight:bold;color:#9b9ca5;">12</span>
<span class="t c" style="left:214.30px;top:441px;line-height:18px;font-size:12.55px;color:#242428;">Customer Feedback</span>
<div class="tag" style="left:378px;top:441.35px;width:112.00px;background:#5cb2f4"></div>
<span class="t c" style="left:385.30px;top:440px;line-height:19px;font-size:12.8px;color:#15151a;">Product Marke…</span>
<div class="tag" style="left:513.1px;top:441.35px;width:79.34px;background:#e6e6e6"></div>
<span class="t c" style="left:520.40px;top:440px;line-height:19px;font-size:12.8px;color:#15151a;">Not Started</span>
<span class="t c" style="left:752.40px;top:441px;line-height:18px;font-size:12.55px;color:#242428;">02/18/25</span>
<span class="t c" style="left:844.20px;top:441px;line-height:18px;font-size:12.55px;color:#242428;">03/13/25</span>
<span class="t c" style="right:386.80px;top:441px;line-height:18px;font-size:12.55px;color:#242428;">18d</span>
<div class="dot" style="left:1016.65px;top:443.90px;background:#1f7a33"></div>
<span class="t c" style="left:16.60px;top:468px;line-height:16px;font-size:11px;font-weight:bold;color:#9b9ca5;">13</span>
<div class="box" style="left:171.2px;top:467.35px;width:15.2px;height:16.8px;border-radius:4px;background:#ebe8f6;opacity:.55"></div>
<svg class="i" style="left:175.8px;top:473.75px" width="7" height="4.6" viewBox="0 0 7 4.6"><path d="M0.4 0.3 H6.6 L3.5 4.3Z" fill="#1c1c20" stroke="#1c1c20" stroke-width="0.5" stroke-linejoin="round"/></svg>
<span class="t c" style="left:192.90px;top:467px;line-height:18px;font-size:12.55px;font-weight:bold;color:#1b1b1f;">Sales and Distribution</span>
<div class="tag" style="left:378px;top:467.05px;width:48.35px;background:#d590d7"></div>
<span class="t c" style="left:385.30px;top:466px;line-height:19px;font-size:12.8px;font-weight:bold;color:#15151a;">Sales</span>
<span class="t c" style="left:752.40px;top:467px;line-height:18px;font-size:12.55px;font-weight:bold;color:#5e6b79;">06/18/25</span>
<span class="t c" style="left:844.20px;top:467px;line-height:18px;font-size:12.55px;font-weight:bold;color:#5e6b79;">04/17/26</span>
<span class="t c" style="right:386.80px;top:467px;line-height:18px;font-size:12.55px;font-weight:bold;color:#5e6b79;">218d</span>
<span class="t c" style="left:16.60px;top:493px;line-height:16px;font-size:11px;font-weight:bold;color:#9b9ca5;">14</span>
<span class="t c" style="left:214.30px;top:493px;line-height:18px;font-size:12.55px;color:#242428;">Sales Training</span>
<div class="tag" style="left:378px;top:492.75px;width:46.92px;background:#d590d7"></div>
<span class="t c" style="left:385.30px;top:492px;line-height:19px;font-size:12.8px;color:#15151a;">Sales</span>
<div class="tag" style="left:513.1px;top:492.75px;width:79.34px;background:#e6e6e6"></div>
<span class="t c" style="left:520.40px;top:492px;line-height:19px;font-size:12.8px;color:#15151a;">Not Started</span>
<svg class="i" style="left:627.70px;top:492.15px;border-radius:50%;overflow:hidden" width="18.3" height="18.3" viewBox="0 0 18.3 18.3"><defs><clipPath id="c627_492"><circle cx="9.15" cy="9.15" r="9.15"/></clipPath></defs><g clip-path="url(#c627_492)"><rect width="18.3" height="18.3" fill="#e5ac1e"/><path d="M0.5 18.3 Q1.5 12.4 6 11.8 L12.4 11.8 Q17 12.4 17.8 18.3Z" fill="#2d2b30"/><path d="M7.2 12.4 L9.2 17 L11.2 12.4Z" fill="#e8e6e0"/><ellipse cx="9.2" cy="7.4" rx="3.2" ry="4.7" fill="#c99a78"/><path d="M5.9 6.2 Q5.7 1.8 9.2 1.8 Q12.7 1.8 12.5 6.2 Q9.2 4 5.9 6.2Z" fill="#231a1a"/><path d="M6.1 9 Q9.2 14.6 12.3 9 Q9.2 10.4 6.1 9Z" fill="#2a1d1a"/></g></svg>
<span class="t c" style="left:650.10px;top:493px;line-height:18px;font-size:12.55px;color:#242428;">Hubert Ali</span>
<span class="t c" style="left:752.40px;top:493px;line-height:18px;font-size:12.55px;color:#242428;">06/18/25</span>
<span class="t c" style="left:844.20px;top:493px;line-height:18px;font-size:12.55px;color:#242428;">08/18/25</span>
<span class="t c" style="right:386.80px;top:493px;line-height:18px;font-size:12.55px;color:#242428;">44d</span>
<div class="dot" style="left:1016.65px;top:495.30px;background:#f9cd70"></div>
<span class="t c" style="left:16.60px;top:519px;line-height:16px;font-size:11px;font-weight:bold;color:#9b9ca5;">15</span>
<span class="t c" style="left:214.30px;top:518px;line-height:18px;font-size:12.55px;color:#242428;">Product Distribution</span>
<div class="tag" style="left:378px;top:518.45px;width:46.92px;background:#d590d7"></div>
<span class="t c" style="left:385.30px;top:517px;line-height:19px;font-size:12.8px;color:#15151a;">Sales</span>
<div class="tag" style="left:513.1px;top:518.45px;width:79.34px;background:#e6e6e6"></div>
<span class="t c" style="left:520.40px;top:517px;line-height:19px;font-size:12.8px;color:#15151a;">Not Started</span>
<svg class="i" style="left:627.70px;top:517.85px;border-radius:50%;overflow:hidden" width="18.3" height="18.3" viewBox="0 0 18.3 18.3"><defs><clipPath id="c627_517"><circle cx="9.15" cy="9.15" r="9.15"/></clipPath></defs><g clip-path="url(#c627_517)"><rect width="18.3" height="18.3" fill="#e5ac1e"/><path d="M0.5 18.3 Q1.5 12.4 6 11.8 L12.4 11.8 Q17 12.4 17.8 18.3Z" fill="#2d2b30"/><path d="M7.2 12.4 L9.2 17 L11.2 12.4Z" fill="#e8e6e0"/><ellipse cx="9.2" cy="7.4" rx="3.2" ry="4.7" fill="#c99a78"/><path d="M5.9 6.2 Q5.7 1.8 9.2 1.8 Q12.7 1.8 12.5 6.2 Q9.2 4 5.9 6.2Z" fill="#231a1a"/><path d="M6.1 9 Q9.2 14.6 12.3 9 Q9.2 10.4 6.1 9Z" fill="#2a1d1a"/></g></svg>
<span class="t c" style="left:650.10px;top:518px;line-height:18px;font-size:12.55px;color:#242428;">Hubert Ali</span>
<span class="t c" style="left:752.40px;top:518px;line-height:18px;font-size:12.55px;color:#242428;">06/18/25</span>
<span class="t c" style="left:844.20px;top:518px;line-height:18px;font-size:12.55px;color:#242428;">11/17/25</span>
<span class="t c" style="right:386.80px;top:518px;line-height:18px;font-size:12.55px;color:#242428;">109d</span>
<div class="dot" style="left:1016.65px;top:521.00px;background:#1f7a33"></div>
<span class="t c" style="left:16.60px;top:545px;line-height:16px;font-size:11px;font-weight:bold;color:#9b9ca5;">16</span>
<span class="t c" style="left:214.30px;top:544px;line-height:18px;font-size:12.55px;color:#242428;">Customer Feedback</span>
<div class="tag" style="left:378px;top:544.15px;width:46.92px;background:#d590d7"></div>
<span class="t c" style="left:385.30px;top:543px;line-height:19px;font-size:12.8px;color:#15151a;">Sales</span>
<div class="tag" style="left:513.1px;top:544.15px;width:79.34px;background:#e6e6e6"></div>
<span class="t c" style="left:520.40px;top:543px;line-height:19px;font-size:12.8px;color:#15151a;">Not Started</span>
<svg class="i" style="left:627.70px;top:543.55px;border-radius:50%;overflow:hidden" width="18.3" height="18.3" viewBox="0 0 18.3 18.3"><defs><clipPath id="c627_543"><circle cx="9.15" cy="9.15" r="9.15"/></clipPath></defs><g clip-path="url(#c627_543)"><rect width="18.3" height="18.3" fill="#e5ac1e"/><path d="M0.5 18.3 Q1.5 12.4 6 11.8 L12.4 11.8 Q17 12.4 17.8 18.3Z" fill="#2d2b30"/><path d="M7.2 12.4 L9.2 17 L11.2 12.4Z" fill="#e8e6e0"/><ellipse cx="9.2" cy="7.4" rx="3.2" ry="4.7" fill="#c99a78"/><path d="M5.9 6.2 Q5.7 1.8 9.2 1.8 Q12.7 1.8 12.5 6.2 Q9.2 4 5.9 6.2Z" fill="#231a1a"/><path d="M6.1 9 Q9.2 14.6 12.3 9 Q9.2 10.4 6.1 9Z" fill="#2a1d1a"/></g></svg>
<span class="t c" style="left:650.10px;top:544px;line-height:18px;font-size:12.55px;color:#242428;">Hubert Ali</span>
<span class="t c" style="left:752.40px;top:544px;line-height:18px;font-size:12.55px;color:#242428;">11/18/25</span>
<span class="t c" style="left:844.20px;top:544px;line-height:18px;font-size:12.55px;color:#242428;">04/17/26</span>
<span class="t c" style="right:386.80px;top:544px;line-height:18px;font-size:12.55px;color:#242428;">109d</span>
<div class="dot" style="left:1016.65px;top:546.70px;background:#1f7a33"></div>
<span class="t c" style="left:16.60px;top:571px;line-height:16px;font-size:11px;font-weight:bold;color:#9b9ca5;">17</span>
<div class="box" style="left:171.2px;top:570.15px;width:15.2px;height:16.8px;border-radius:4px;background:#ebe8f6;opacity:.55"></div>
<svg class="i" style="left:175.8px;top:576.55px" width="7" height="4.6" viewBox="0 0 7 4.6"><path d="M0.4 0.3 H6.6 L3.5 4.3Z" fill="#1c1c20" stroke="#1c1c20" stroke-width="0.5" stroke-linejoin="round"/></svg>
<span class="t c" style="left:192.90px;top:570px;line-height:18px;font-size:12.55px;font-weight:bold;color:#1b1b1f;">Customer Support</span>
<span class="t c" style="left:385.30px;top:569px;line-height:19px;font-size:12.8px;font-weight:bold;color:#15151a;">Customer Ed…</span>
<span class="t c" style="left:752.40px;top:570px;line-height:18px;font-size:12.55px;font-weight:bold;color:#5e6b79;">06/18/25</span>
<span class="t c" style="left:844.20px;top:570px;line-height:18px;font-size:12.55px;font-weight:bold;color:#5e6b79;">11/17/25</span>
<span class="t c" style="right:386.80px;top:570px;line-height:18px;font-size:12.55px;font-weight:bold;color:#5e6b79;">109d</span>
<span class="t c" style="left:16.60px;top:596px;line-height:16px;font-size:11px;font-weight:bold;color:#9b9ca5;">18</span>
<span class="t c" style="left:214.30px;top:596px;line-height:18px;font-size:12.55px;color:#242428;">Record Webinar Demo</span>
<span class="t c" style="left:385.30px;top:595px;line-height:19px;font-size:12.8px;color:#15151a;">Customer Edu…</span>
<div class="tag" style="left:513.1px;top:595.55px;width:79.34px;background:#e6e6e6"></div>
<span class="t c" style="left:520.40px;top:595px;line-height:19px;font-size:12.8px;color:#15151a;">Not Started</span>
<svg class="i" style="left:627.70px;top:594.95px;border-radius:50%;overflow:hidden" width="18.3" height="18.3" viewBox="0 0 18.3 18.3"><defs><clipPath id="c627_594"><circle cx="9.15" cy="9.15" r="9.15"/></clipPath></defs><g clip-path="url(#c627_594)"><rect width="18.3" height="18.3" fill="#f6b25c"/><ellipse cx="9.2" cy="18.4" rx="8" ry="5" fill="#dcdce1"/><ellipse cx="8.6" cy="9" rx="3" ry="4.6" fill="#5e4636"/><ellipse cx="8.4" cy="6.4" rx="2.8" ry="2" fill="#3a2a2a"/></g></svg>
<span class="t c" style="left:650.10px;top:596px;line-height:18px;font-size:12.55px;color:#242428;">Percy Riggs</span>
<span class="t c" style="left:752.40px;top:596px;line-height:18px;font-size:12.55px;color:#242428;">06/18/25</span>
<span class="t c" style="left:844.20px;top:596px;line-height:18px;font-size:12.55px;color:#242428;">06/18/25</span>
<span class="t c" style="right:386.80px;top:596px;line-height:18px;font-size:12.55px;color:#242428;">1d</span>
<div class="dot" style="left:1016.65px;top:598.10px;background:#1f7a33"></div>
<span class="t c" style="left:16.60px;top:622px;line-height:16px;font-size:11px;font-weight:bold;color:#9b9ca5;">19</span>
<span class="t c" style="left:214.30px;top:621px;line-height:18px;font-size:12.55px;color:#242428;">Customer help document</span>
<span class="t c" style="left:385.30px;top:620px;line-height:19px;font-size:12.8px;color:#15151a;">Customer Edu…</span>
<div class="tag" style="left:513.1px;top:621.25px;width:80.05px;background:#ebc6ec"></div>
<span class="t c" style="left:520.40px;top:620px;line-height:19px;font-size:12.8px;color:#15151a;">In Progress</span>
<svg class="i" style="left:627.70px;top:620.65px;border-radius:50%;overflow:hidden" width="18.3" height="18.3" viewBox="0 0 18.3 18.3"><defs><clipPath id="c627_620"><circle cx="9.15" cy="9.15" r="9.15"/></clipPath></defs><g clip-path="url(#c627_620)"><rect width="18.3" height="18.3" fill="#f4c965"/><ellipse cx="9.2" cy="9.2" rx="3.3" ry="5" fill="#c9a182"/><path d="M5.8 7 Q5.6 2.6 9.2 2.6 Q12.8 2.6 12.6 7 Q9.2 5 5.8 7Z" fill="#2b2424"/><path d="M6 10.6 Q9.2 17.4 12.4 10.6 Q9.2 12.4 6 10.6Z" fill="#3b2c28"/><rect x="6.4" y="7.2" width="5.6" height="1.4" fill="#e9e2e2" opacity=".8"/><path d="M5.4 18.3 Q6 14.8 9.2 15 Q12.4 14.8 13 18.3Z" fill="#4b4248"/></g></svg>
<span class="t c" style="left:650.10px;top:621px;line-height:18px;font-size:12.55px;color:#242428;">Dale Marshall</span>
<span class="t c" style="left:752.40px;top:621px;line-height:18px;font-size:12.55px;color:#242428;">06/18/25</span>
<span class="t c" style="left:844.20px;top:621px;line-height:18px;font-size:12.55px;color:#242428;">09/02/25</span>
<span class="t c" style="right:386.80px;top:621px;line-height:18px;font-size:12.55px;color:#242428;">55d</span>
<div class="dot" style="left:1016.65px;top:623.80px;background:#f9cd70"></div>
<span class="t c" style="left:16.60px;top:648px;line-height:16px;font-size:11px;font-weight:bold;color:#9b9ca5;">20</span>
<span class="t c" style="left:214.30px;top:647px;line-height:18px;font-size:12.55px;color:#242428;">Customer training</span>
<span class="t c" style="left:385.30px;top:646px;line-height:19px;font-size:12.8px;color:#15151a;">Customer Edu…</span>
<div class="tag" style="left:513.1px;top:646.95px;width:79.34px;background:#e6e6e6"></div>
<span class="t c" style="left:520.40px;top:646px;line-height:19px;font-size:12.8px;color:#15151a;">Not Started</span>
<svg class="i" style="left:627.70px;top:646.35px;border-radius:50%;overflow:hidden" width="18.3" height="18.3" viewBox="0 0 18.3 18.3"><defs><clipPath id="c627_646"><circle cx="9.15" cy="9.15" r="9.15"/></clipPath></defs><g clip-path="url(#c627_646)"><rect width="18.3" height="18.3" fill="#f4c965"/><ellipse cx="9.2" cy="9.2" rx="3.3" ry="5" fill="#c9a182"/><path d="M5.8 7 Q5.6 2.6 9.2 2.6 Q12.8 2.6 12.6 7 Q9.2 5 5.8 7Z" fill="#2b2424"/><path d="M6 10.6 Q9.2 17.4 12.4 10.6 Q9.2 12.4 6 10.6Z" fill="#3b2c28"/><rect x="6.4" y="7.2" width="5.6" height="1.4" fill="#e9e2e2" opacity=".8"/><path d="M5.4 18.3 Q6 14.8 9.2 15 Q12.4 14.8 13 18.3Z" fill="#4b4248"/></g></svg>
<span class="t c" style="left:650.10px;top:647px;line-height:18px;font-size:12.55px;color:#242428;">Dale Marshall</span>
<span class="t c" style="left:752.40px;top:647px;line-height:18px;font-size:12.55px;color:#242428;">06/18/25</span>
<span class="t c" style="left:844.20px;top:647px;line-height:18px;font-size:12.55px;color:#242428;">11/17/25</span>
<span class="t c" style="right:386.80px;top:647px;line-height:18px;font-size:12.55px;color:#242428;">109d</span>
<div class="dot" style="left:1016.65px;top:649.50px;background:#d2132c"></div>
<span class="t c" style="left:16.60px;top:673px;line-height:16px;font-size:11px;font-weight:bold;color:#9b9ca5;">21</span>
<span class="t c" style="left:192.40px;top:673px;line-height:18px;font-size:12.55px;color:#242428;">Bug bash</span>
<div class="tag" style="left:378px;top:672.65px;width:59.01px;background:#fcc872"></div>
<span class="t c" style="left:385.30px;top:672px;line-height:19px;font-size:12.8px;color:#15151a;">Product</span>
<div class="tag" style="left:513.1px;top:672.65px;width:69.38px;background:#cde6dd"></div>
<span class="t c" style="left:520.40px;top:672px;line-height:19px;font-size:12.8px;color:#15151a;">Complete</span>
<svg class="i" style="left:627.70px;top:672.05px;border-radius:50%;overflow:hidden" width="18.3" height="18.3" viewBox="0 0 18.3 18.3"><defs><clipPath id="c627_672"><circle cx="9.15" cy="9.15" r="9.15"/></clipPath></defs><g clip-path="url(#c627_672)"><rect width="18.3" height="18.3" fill="#5c8f95"/><circle cx="9.15" cy="9.15" r="7.6" fill="#3a3a48"/><path d="M3 18 Q3 6 8.4 3.4 Q14.4 3 15.6 9 Q16 15 13 18.3Z" fill="#25202a"/><ellipse cx="7.8" cy="9.4" rx="2.5" ry="3.4" fill="#b98f80"/><path d="M9.6 12 Q12.4 13 12.6 18.3 H8.6Z" fill="#d7d0d6"/></g></svg>
<span class="t c" style="left:650.10px;top:673px;line-height:18px;font-size:12.55px;color:#242428;max-width:80.2px;overflow:hidden;">Cesar Chapman</span>
<span class="t c" style="left:752.40px;top:673px;line-height:18px;font-size:12.55px;color:#242428;">06/18/25</span>
<span class="t c" style="left:844.20px;top:673px;line-height:18px;font-size:12.55px;color:#242428;">07/09/25</span>
<span class="t c" style="right:386.80px;top:673px;line-height:18px;font-size:12.55px;color:#242428;">16d</span>
<div class="dot" style="left:1016.65px;top:675.20px;background:#1f7a33"></div>
<span class="t c" style="left:16.60px;top:699px;line-height:16px;font-size:11px;font-weight:bold;color:#9b9ca5;">22</span>
<span class="t c" style="left:16.60px;top:725px;line-height:16px;font-size:11px;font-weight:bold;color:#9b9ca5;">23</span>
<span class="t c" style="left:16.60px;top:750px;line-height:16px;font-size:11px;font-weight:bold;color:#9b9ca5;">24</span>
</div></body></html>
